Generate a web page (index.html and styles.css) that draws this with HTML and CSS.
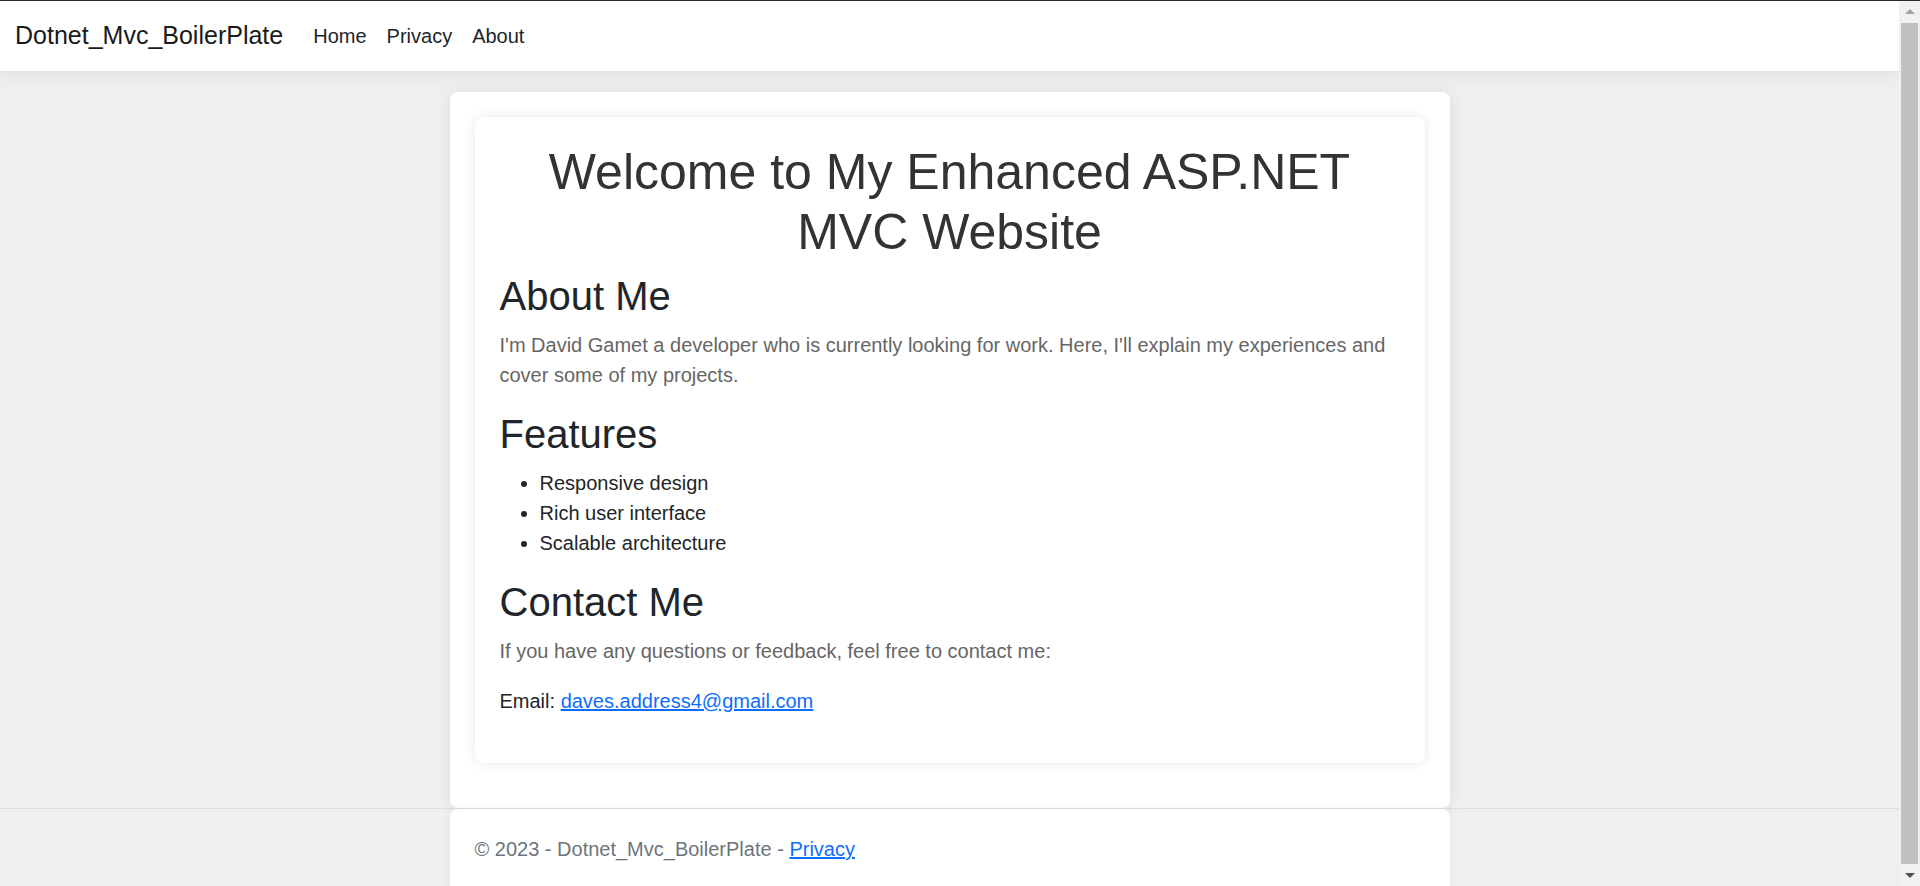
FILE: index.html
```html
<!DOCTYPE html>
<html lang="en">
<head>
<meta charset="utf-8">
<title>Home Page - Dotnet_Mvc_BoilerPlate</title>
<link rel="stylesheet" href="styles.css">
</head>
<body>
<div class="window">
  <div class="viewport">
    <header class="navbar">
      <a class="brand" href="#">Dotnet_Mvc_BoilerPlate</a>
      <ul class="nav">
        <li><a class="nav-link" href="#">Home</a></li>
        <li><a class="nav-link" href="#">Privacy</a></li>
        <li><a class="nav-link" href="#">About</a></li>
      </ul>
    </header>
    <main class="page">
      <div class="container">
        <div class="content-card">
          <h1 class="title">Welcome to My Enhanced ASP.NET MVC Website</h1>
          <h2 class="section-title">About Me</h2>
          <p class="muted">I'm David Gamet a developer who is currently looking for work. Here, I'll explain my experiences and cover some of my projects.</p>
          <h2 class="section-title">Features</h2>
          <ul class="features">
            <li>Responsive design</li>
            <li>Rich user interface</li>
            <li>Scalable architecture</li>
          </ul>
          <h2 class="section-title">Contact Me</h2>
          <p class="muted">If you have any questions or feedback, feel free to contact me:</p>
          <p class="email">Email: <a class="link" href="#">daves.address4@gmail.com</a></p>
        </div>
      </div>
    </main>
    <footer class="footer">
      <div class="footer-box">© 2023 - Dotnet_Mvc_BoilerPlate - <a class="link" href="#">Privacy</a></div>
    </footer>
  </div>
  <div class="scrollbar">
    <div class="sb-btn"><span class="arrow-up"></span></div>
    <div class="sb-track"><div class="sb-thumb"></div></div>
    <div class="sb-btn"><span class="arrow-down"></span></div>
  </div>
</div>
</body>
</html>
```

FILE: styles.css
```css
* { box-sizing: border-box; }

html, body {
  margin: 0;
  padding: 0;
  height: 886px;
  overflow: hidden;
}

body {
  font-family: "Liberation Sans", Arial, sans-serif;
  font-size: 20px;
  line-height: 1.5;
  color: #212529;
  background: #efefef;
}

.window {
  display: flex;
  height: 886px;
  border-top: 1px solid #2b2b2b;
}

.viewport {
  flex: 1;
  display: flex;
  flex-direction: column;
  background: #efefef;
  overflow: hidden;
  min-width: 0;
}

/* Navbar */
.navbar {
  display: flex;
  align-items: center;
  height: 71px;
  padding: 0 15px;
  background: #ffffff;
  border-bottom: 1px solid #dee2e6;
  box-shadow: 0 5px 15px rgba(0, 0, 0, 0.05);
  flex-shrink: 0;
}

.brand {
  font-size: 25px;
  line-height: 37.5px;
  color: #1a1a1a;
  text-decoration: none;
  margin-right: 20px;
}

.nav {
  display: flex;
  list-style: none;
  margin: 0;
  padding: 0;
}

.nav-link {
  display: block;
  padding: 10px 10px;
  font-size: 20px;
  line-height: 30px;
  color: #212529;
  text-decoration: none;
}

/* Main */
.page {
  padding-top: 20px;
  flex-shrink: 0;
}

.container {
  width: 1000px;
  margin: 0 auto;
  padding: 25px;
  background: #ffffff;
  border-radius: 8px;
  box-shadow: 0 0 15px rgba(0, 0, 0, 0.08);
}

.content-card {
  padding: 25px 25px 27px;
  margin-bottom: 20px;
  background: #ffffff;
  border-radius: 8px;
  box-shadow: 0 0 12px rgba(0, 0, 0, 0.1);
}

.title {
  margin: 0 0 10px;
  font-size: 50px;
  font-weight: 400;
  line-height: 1.2;
  color: #333333;
  text-align: center;
}

.section-title {
  margin: 0 0 10px;
  font-size: 40px;
  font-weight: 400;
  line-height: 1.2;
  color: #212529;
}

.content-card p {
  margin: 0 0 20px;
}

.muted {
  color: #666666;
}

.features {
  margin: 0 0 20px;
  padding-left: 40px;
}

.email {
  color: #212529;
}

.link {
  color: #0d6efd;
  text-decoration: underline;
}

/* Footer */
.footer {
  border-top: 1px solid #dcdce4;
  flex: 1;
  display: flex;
  justify-content: center;
}

.footer-box {
  width: 1000px;
  padding: 1px 0 0 25px;
  background: #ffffff;
  border-radius: 8px 8px 0 0;
  line-height: 79px;
  color: #6c757d;
  white-space: nowrap;
  box-shadow: 0 0 10px rgba(0, 0, 0, 0.05);
}

/* Scrollbar */
.scrollbar {
  width: 21px;
  display: flex;
  flex-direction: column;
  background: #f1f1f1;
  flex-shrink: 0;
}

.sb-btn {
  height: 21px;
  display: flex;
  align-items: center;
  justify-content: center;
  flex-shrink: 0;
}

.sb-track {
  flex: 1;
  padding: 1px 2px;
  display: flex;
}

.sb-thumb {
  flex: 1;
  background: #c1c1c1;
}

.arrow-up {
  width: 0;
  height: 0;
  border-left: 5px solid transparent;
  border-right: 5px solid transparent;
  border-bottom: 5px solid #a3a3a3;
}

.arrow-down {
  width: 0;
  height: 0;
  border-left: 5px solid transparent;
  border-right: 5px solid transparent;
  border-top: 5px solid #505050;
}
```
